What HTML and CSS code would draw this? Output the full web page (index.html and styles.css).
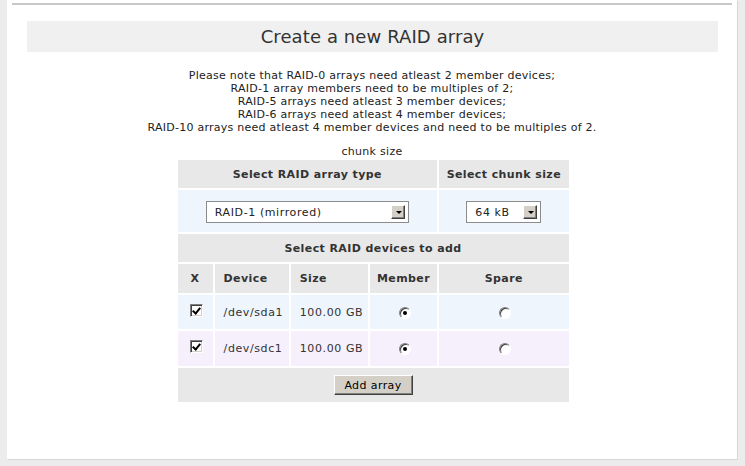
FILE: index.html
```html
<!DOCTYPE html>
<html lang="en">

<head>
    <meta charset="UTF-8">
    <title>Create a new RAID array</title>
    <link rel="stylesheet" href="styles.css">
</head>

<body>
    <div class="page">
        <div class="top-rule"></div>
        <h2 class="title">Create a new RAID array</h2>

        <p class="note">
            Please note that RAID-0 arrays need atleast 2 member devices;<br>
            RAID-1 array members need to be multiples of 2;<br>
            RAID-5 arrays need atleast 3 member devices;<br>
            RAID-6 arrays need atleast 4 member devices;<br>
            RAID-10 arrays need atleast 4 member devices and need to be multiples of 2.
        </p>

        <div class="chunk-label">chunk size</div>

        <table class="raid-table">
            <colgroup>
                <col class="c-x">
                <col class="c-dev">
                <col class="c-size">
                <col class="c-member">
                <col class="c-spare">
            </colgroup>
            <tr class="head row-h1">
                <th colspan="4">Select RAID array type</th>
                <th>Select chunk size</th>
            </tr>
            <tr class="blue row-sel">
                <td colspan="4">
                    <span class="select wide"><span class="sel-text">RAID-1 (mirrored)</span><span class="sel-btn"></span></span>
                </td>
                <td>
                    <span class="select small"><span class="sel-text">64 kB</span><span class="sel-btn"></span></span>
                </td>
            </tr>
            <tr class="head row-h2">
                <th colspan="5">Select RAID devices to add</th>
            </tr>
            <tr class="head row-h3">
                <th>X</th>
                <th class="left">Device</th>
                <th class="left">Size</th>
                <th>Member</th>
                <th>Spare</th>
            </tr>
            <tr class="blue row-dev">
                <td><span class="check"></span></td>
                <td class="left">/dev/sda1</td>
                <td class="left">100.00 GB</td>
                <td><span class="radio on"></span></td>
                <td><span class="radio"></span></td>
            </tr>
            <tr class="purple row-dev2">
                <td><span class="check"></span></td>
                <td class="left">/dev/sdc1</td>
                <td class="left">100.00 GB</td>
                <td><span class="radio on"></span></td>
                <td><span class="radio"></span></td>
            </tr>
            <tr class="head row-btn">
                <td colspan="5"><button class="btn">Add array</button></td>
            </tr>
        </table>
    </div>
</body>

</html>
```

FILE: styles.css
```css
html, body {
    margin: 0;
    padding: 0;
}

body {
    background-color: #ececec;
    font-family: 'DejaVu Sans', Verdana, sans-serif;
    font-size: 11px;
    color: #333;
    width: 745px;
    height: 466px;
    overflow: hidden;
}

.page {
    background-color: #fff;
    margin: 0 8px 0 7px;
    height: 459px;
    padding-top: 3px;
    box-sizing: border-box;
    box-shadow: 1px 1px 0 #d8d8d8;
}

.top-rule {
    height: 2px;
    background-color: #c8c8c8;
    margin: 0 5px 0 5px;
}

.title {
    margin: 16px 19px 0 20px;
    height: 31px;
    line-height: 31px;
    background-color: #f0f0f0;
    text-align: center;
    font-weight: normal;
    font-size: 18px;
    letter-spacing: 0.1px;
    color: #333;
}

.note {
    margin: 17px 0 0 0;
    text-align: center;
    line-height: 13px;
    font-size: 11px;
    letter-spacing: 0.26px;
    color: #222;
}

.chunk-label {
    margin-top: 11px;
    text-align: center;
    font-size: 11px;
    letter-spacing: 0.3px;
    line-height: 13px;
    color: #222;
}

.raid-table {
    border-collapse: separate;
    border-spacing: 2px;
    table-layout: fixed;
    margin: 0 auto 0 auto;
    width: 395px;
    position: relative;
    left: 1px;
}

.c-x { width: 35px; }
.c-dev { width: 74px; }
.c-size { width: 77px; }
.c-member { width: 67px; }
.c-spare { width: 129px; }

.raid-table th,
.raid-table td {
    padding: 0;
    text-align: center;
    font-size: 11px;
    letter-spacing: 0.6px;
    color: #333;
}

.raid-table th {
    font-weight: bold;
    letter-spacing: 0.4px;
}

.raid-table .left {
    text-align: left;
    padding-left: 9px;
}

.head th,
.head td {
    background-color: #e8e8e8;
}

.blue td {
    background-color: #eef5fc;
}

.purple td {
    background-color: #f6effc;
}

.row-h1 { height: 28px; }
.row-sel { height: 42px; }
.row-h2 { height: 28px; }
.row-h3 { height: 29px; }
.row-dev { height: 34px; }
.row-dev2 { height: 35px; }
.row-btn { height: 34px; }

.select {
    display: inline-flex;
    align-items: center;
    justify-content: space-between;
    height: 22px;
    box-sizing: border-box;
    border: 1px solid #8c8c8c;
    background-color: #fff;
    padding: 0 3px 0 8px;
    vertical-align: middle;
    font-size: 11px;
    letter-spacing: 0.6px;
    color: #222;
    position: relative;
    top: 1px;
}

.select.wide {
    width: 203px;
}

.select.small {
    width: 75px;
}

.sel-btn {
    width: 14px;
    height: 14px;
    box-sizing: border-box;
    background-color: #d4d0c8;
    border-top: 1px solid #fff;
    border-left: 1px solid #fff;
    border-right: 1px solid #404040;
    border-bottom: 1px solid #404040;
    box-shadow: inset -1px -1px 0 #808080;
    position: relative;
}

.sel-btn::after {
    content: "";
    position: absolute;
    left: 4px;
    top: 5px;
    border-left: 3px solid transparent;
    border-right: 3px solid transparent;
    border-top: 3px solid #000;
}

.check {
    display: inline-block;
    width: 13px;
    height: 13px;
    box-sizing: border-box;
    background-color: #fff;
    border-top: 1px solid #808080;
    border-left: 1px solid #808080;
    border-right: 1px solid #fff;
    border-bottom: 1px solid #fff;
    box-shadow: inset 1px 1px 0 #404040, inset -1px -1px 0 #d4d0c8;
    position: relative;
    vertical-align: middle;
    top: -2px;
    left: 1px;
}

.check::after {
    content: "";
    position: absolute;
    left: 3px;
    top: 1px;
    width: 3px;
    height: 6px;
    border-right: 2px solid #000;
    border-bottom: 2px solid #000;
    transform: rotate(40deg);
}

.radio {
    display: inline-block;
    width: 12px;
    height: 12px;
    box-sizing: border-box;
    border-radius: 50%;
    background-color: #fff;
    border: 1px solid;
    border-color: #808080 #fff #fff #808080;
    box-shadow: inset 1px 1px 0 #404040;
    position: relative;
    vertical-align: middle;
    left: 1px;
}

.radio.on::after {
    content: "";
    position: absolute;
    left: 3px;
    top: 3px;
    width: 4px;
    height: 4px;
    border-radius: 50%;
    background-color: #000;
}

.btn {
    font-family: 'DejaVu Sans', Verdana, sans-serif;
    font-size: 11px;
    color: #000;
    width: 79px;
    height: 20px;
    padding: 0;
    background-color: #d4d0c8;
    border-top: 1px solid #fff;
    border-left: 1px solid #fff;
    border-right: 1px solid #404040;
    border-bottom: 1px solid #404040;
    box-shadow: inset -1px -1px 0 #808080;
    letter-spacing: 0.4px;
}
```
